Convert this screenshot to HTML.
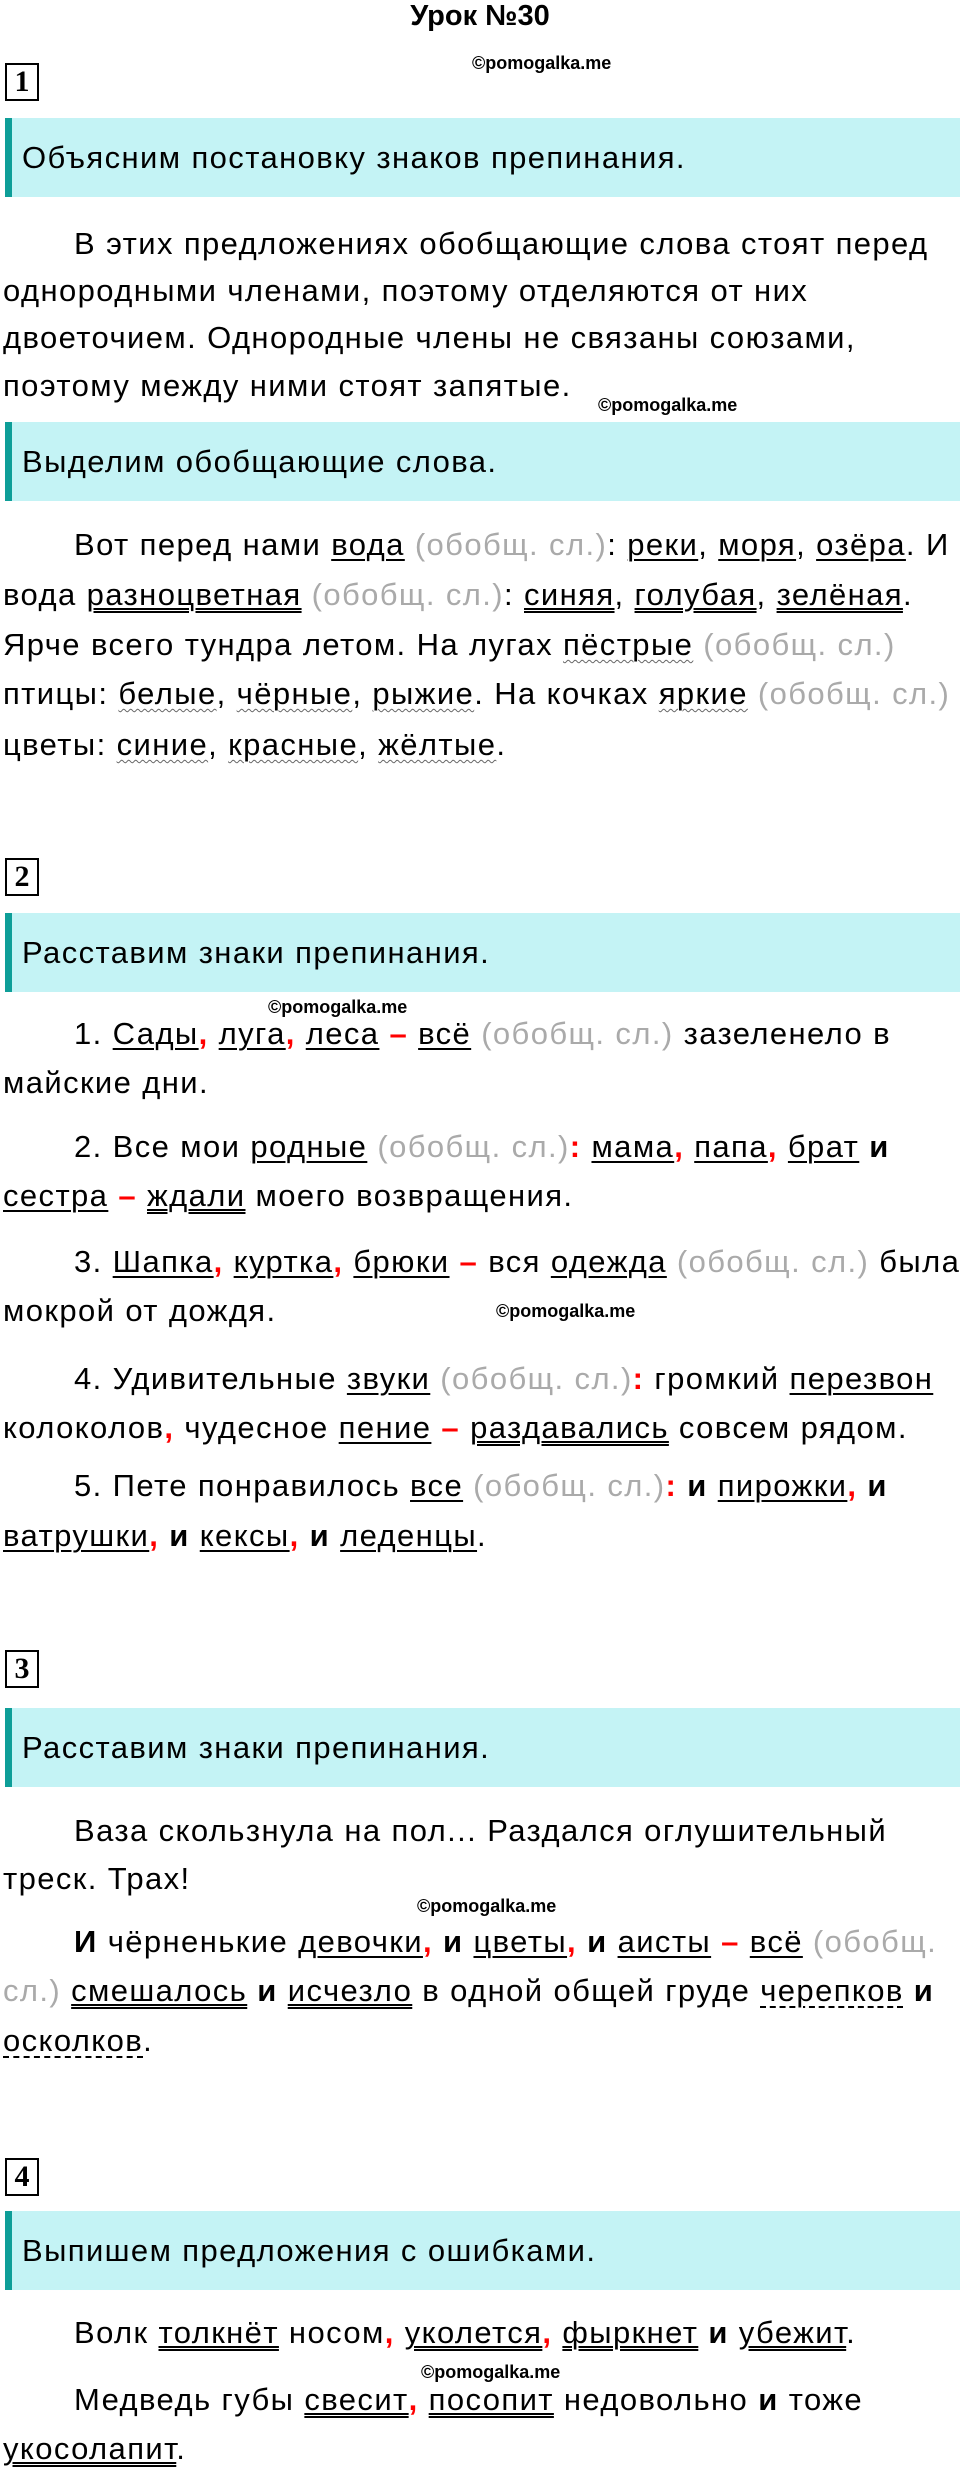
<!DOCTYPE html>
<html><head><meta charset="utf-8"><style>
body{margin:0;background:#fff;width:960px;height:2476px;position:relative;overflow:hidden;font-family:"Liberation Sans",sans-serif;color:#000}
.l{position:absolute;left:3px;white-space:nowrap;font-size:31px;letter-spacing:1.4px;line-height:48px;height:48px}
.i{left:74px}
.band{position:absolute;left:5px;width:955px;height:79px;background:#c4f3f5;border-left:7px solid #0e9e98;box-sizing:border-box}
.band span{position:absolute;left:10px;top:0;line-height:79px;font-size:31px;letter-spacing:1.4px;white-space:nowrap}
.box{position:absolute;left:5px;width:34px;height:38px;border:2px solid #000;box-sizing:border-box;font-family:"Liberation Serif",serif;font-weight:bold;font-size:30px;line-height:34px;text-align:center}
.wm{position:absolute;font-weight:bold;font-size:18px;white-space:nowrap;line-height:20px}
.u{text-decoration:underline;text-decoration-thickness:2px;text-underline-offset:4px}
.uu{text-decoration:underline double;text-decoration-thickness:1.5px;text-underline-offset:3px}
.w{text-decoration:underline wavy #666;text-decoration-thickness:1px;text-underline-offset:4px}
.d{text-decoration:underline dashed;text-decoration-thickness:2px;text-underline-offset:5px}
.g{color:#aaa}
.r{color:#f00;font-weight:bold}
.b{font-weight:bold}
</style></head><body>
<div style="position:absolute;left:0;width:960px;top:0;text-align:center;font-weight:bold;font-size:29px;line-height:32px">Урок №30</div>
<div class="wm" style="left:472px;top:53px">©pomogalka.me</div>
<div class="box" style="top:63px">1</div>
<div class="band" style="top:118px"><span>Объясним постановку знаков препинания.</span></div>
<div class="l i" style="top:220px">В этих предложениях обобщающие слова стоят перед</div>
<div class="l" style="top:267px">однородными членами, поэтому отделяются от них</div>
<div class="l" style="top:314px">двоеточием. Однородные члены не связаны союзами,</div>
<div class="l" style="top:362px">поэтому между ними стоят запятые.</div>
<div class="wm" style="left:598px;top:395px">©pomogalka.me</div>
<div class="band" style="top:422px"><span>Выделим обобщающие слова.</span></div>
<div class="l i" style="top:521px">Вот перед нами <span class="u">вода</span> <span class="g">(обобщ. сл.)</span>: <span class="u">реки</span>, <span class="u">моря</span>, <span class="u">озёра</span>. И</div>
<div class="l" style="top:571px">вода <span class="uu">разноцветная</span> <span class="g">(обобщ. сл.)</span>: <span class="uu">синяя</span>, <span class="uu">голубая</span>, <span class="uu">зелёная</span>.</div>
<div class="l" style="top:621px">Ярче всего тундра летом. На лугах <span class="w">пёстрые</span> <span class="g">(обобщ. сл.)</span></div>
<div class="l" style="top:670px">птицы: <span class="w">белые</span>, <span class="w">чёрные</span>, <span class="w">рыжие</span>. На кочках <span class="w">яркие</span> <span class="g">(обобщ. сл.)</span></div>
<div class="l" style="top:721px">цветы: <span class="w">синие</span>, <span class="w">красные</span>, <span class="w">жёлтые</span>.</div>
<div class="box" style="top:858px">2</div>
<div class="band" style="top:913px"><span>Расставим знаки препинания.</span></div>
<div class="wm" style="left:268px;top:997px">©pomogalka.me</div>
<div class="l i" style="top:1010px">1. <span class="u">Сады</span><span class="r">,</span> <span class="u">луга</span><span class="r">,</span> <span class="u">леса</span> <span class="r">–</span> <span class="u">всё</span> <span class="g">(обобщ. сл.)</span> зазеленело в</div>
<div class="l" style="top:1059px">майские дни.</div>
<div class="l i" style="top:1123px">2. Все мои <span class="u">родные</span> <span class="g">(обобщ. сл.)</span><span class="r">:</span> <span class="u">мама</span><span class="r">,</span> <span class="u">папа</span><span class="r">,</span> <span class="u">брат</span> <span class="b">и</span></div>
<div class="l" style="top:1172px"><span class="u">сестра</span> <span class="r">–</span> <span class="uu">ждали</span> моего возвращения.</div>
<div class="l i" style="top:1238px">3. <span class="u">Шапка</span><span class="r">,</span> <span class="u">куртка</span><span class="r">,</span> <span class="u">брюки</span> <span class="r">–</span> вся <span class="u">одежда</span> <span class="g">(обобщ. сл.)</span> была</div>
<div class="l" style="top:1287px">мокрой от дождя.</div>
<div class="wm" style="left:496px;top:1301px">©pomogalka.me</div>
<div class="l i" style="top:1355px">4. Удивительные <span class="u">звуки</span> <span class="g">(обобщ. сл.)</span><span class="r">:</span> громкий <span class="u">перезвон</span></div>
<div class="l" style="top:1404px">колоколов<span class="r">,</span> чудесное <span class="u">пение</span> <span class="r">–</span> <span class="uu">раздавались</span> совсем рядом.</div>
<div class="l i" style="top:1462px">5. Пете понравилось <span class="u">все</span> <span class="g">(обобщ. сл.)</span><span class="r">:</span> <span class="b">и</span> <span class="u">пирожки</span><span class="r">,</span> <span class="b">и</span></div>
<div class="l" style="top:1512px"><span class="u">ватрушки</span><span class="r">,</span> <span class="b">и</span> <span class="u">кексы</span><span class="r">,</span> <span class="b">и</span> <span class="u">леденцы</span>.</div>
<div class="box" style="top:1650px">3</div>
<div class="band" style="top:1708px"><span>Расставим знаки препинания.</span></div>
<div class="l i" style="top:1807px">Ваза скользнула на пол... Раздался оглушительный</div>
<div class="l" style="top:1855px">треск. Трах!</div>
<div class="wm" style="left:417px;top:1896px">©pomogalka.me</div>
<div class="l i" style="top:1918px"><span class="b">И</span> чёрненькие <span class="u">девочки</span><span class="r">,</span> <span class="b">и</span> <span class="u">цветы</span><span class="r">,</span> <span class="b">и</span> <span class="u">аисты</span> <span class="r">–</span> <span class="u">всё</span> <span class="g">(обобщ.</span></div>
<div class="l" style="top:1967px"><span class="g">сл.)</span> <span class="uu">смешалось</span> <span class="b">и</span> <span class="uu">исчезло</span> в одной общей груде <span class="d">черепков</span> <span class="b">и</span></div>
<div class="l" style="top:2017px"><span class="d">осколков</span>.</div>
<div class="box" style="top:2158px">4</div>
<div class="band" style="top:2211px"><span>Выпишем предложения с ошибками.</span></div>
<div class="l i" style="top:2309px">Волк <span class="uu">толкнёт</span> носом<span class="r">,</span> <span class="uu">уколется</span><span class="r">,</span> <span class="uu">фыркнет</span> <span class="b">и</span> <span class="uu">убежит</span>.</div>
<div class="wm" style="left:421px;top:2362px">©pomogalka.me</div>
<div class="l i" style="top:2376px">Медведь губы <span class="uu">свесит</span><span class="r">,</span> <span class="uu">посопит</span> недовольно <span class="b">и</span> тоже</div>
<div class="l" style="top:2425px"><span class="uu">укосолапит</span>.</div>
</body></html>
